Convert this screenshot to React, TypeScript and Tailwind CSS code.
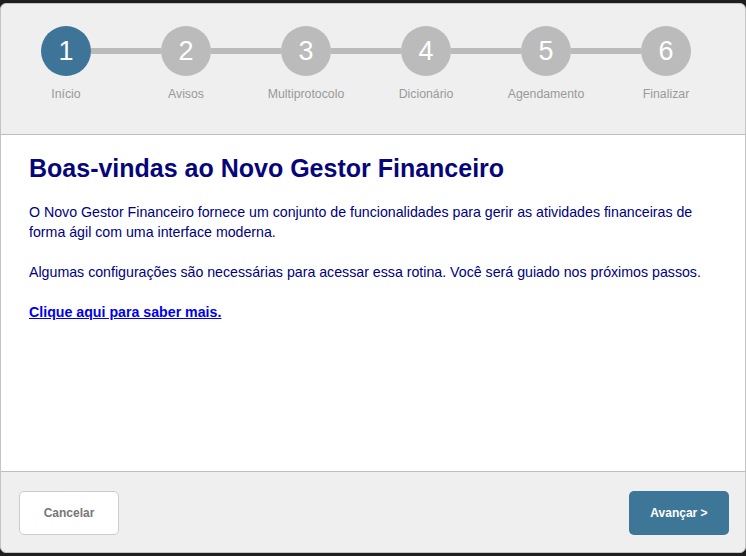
const steps = ['Início', 'Avisos', 'Multiprotocolo', 'Dicionário', 'Agendamento', 'Finalizar'];

export default function App() {
  const current = 0;

  return (
    <div className="w-[746px] h-[556px] bg-[#1e1e1e] pt-[3px] pb-[3px] font-['Liberation_Sans',Arial,sans-serif]">
      <div className="h-full flex flex-col bg-[#efefef] border border-[#c4c4c4] rounded-[6px] overflow-hidden">
        {/* Stepper */}
        <div className="h-[131px] shrink-0 border-b border-[#bdbdbd] pt-[22px] pl-[5px]">
          <div className="flex">
            {steps.map((label, i) => (
              <div key={label} className="w-[120px] flex flex-col items-center">
                <div className="flex items-center w-full">
                  <div className={i === 0 ? 'flex-1 h-[6px]' : 'flex-1 h-[6px] bg-[#bbbbbb]'} />
                  <div
                    className={
                      i === current
                        ? 'w-[50px] h-[50px] rounded-full bg-[#3d7497] flex items-center justify-center text-white text-[27px] leading-none'
                        : 'w-[50px] h-[50px] rounded-full bg-[#bbbbbb] flex items-center justify-center text-white text-[27px] leading-none'
                    }
                  >
                    {i + 1}
                  </div>
                  <div className={i === steps.length - 1 ? 'flex-1 h-[6px]' : 'flex-1 h-[6px] bg-[#bbbbbb]'} />
                </div>
                <span className="mt-[9px] text-[12.3px] text-[#9a9a9a] whitespace-nowrap">{label}</span>
              </div>
            ))}
          </div>
        </div>

        {/* Content */}
        <div className="flex-1 bg-white px-[28px] pt-[18px] text-[#000080]">
          <h1 className="text-[25px] font-bold leading-[30px] text-[#06067a]">Boas-vindas ao Novo Gestor Financeiro</h1>
          <p className="mt-[19px] text-[14.2px] leading-[20px]">
            O Novo Gestor Financeiro fornece um conjunto de funcionalidades para gerir as atividades financeiras de forma ágil com uma interface moderna.
          </p>
          <p className="mt-[20px] text-[14.2px] leading-[20px]">
            Algumas configurações são necessárias para acessar essa rotina. Você será guiado nos próximos passos.
          </p>
          <p className="mt-[20px] text-[14.2px] leading-[20px]">
            <a href="#" className="font-bold underline text-[#0000ee]">Clique aqui para saber mais. </a>
          </p>
        </div>

        {/* Footer */}
        <div className="h-[81px] shrink-0 border-t border-[#bdbdbd] flex items-start justify-between pl-[18px] pr-[16px] pt-[19px]">
          <button className="w-[100px] h-[44px] bg-white border border-[#cccccc] rounded-[5px] text-[12px] font-bold text-[#777777]">
            Cancelar
          </button>
          <button className="w-[100px] h-[44px] bg-[#3e7698] rounded-[5px] text-[12px] font-bold text-white">
            Avançar &gt;
          </button>
        </div>
      </div>
    </div>
  );
}
